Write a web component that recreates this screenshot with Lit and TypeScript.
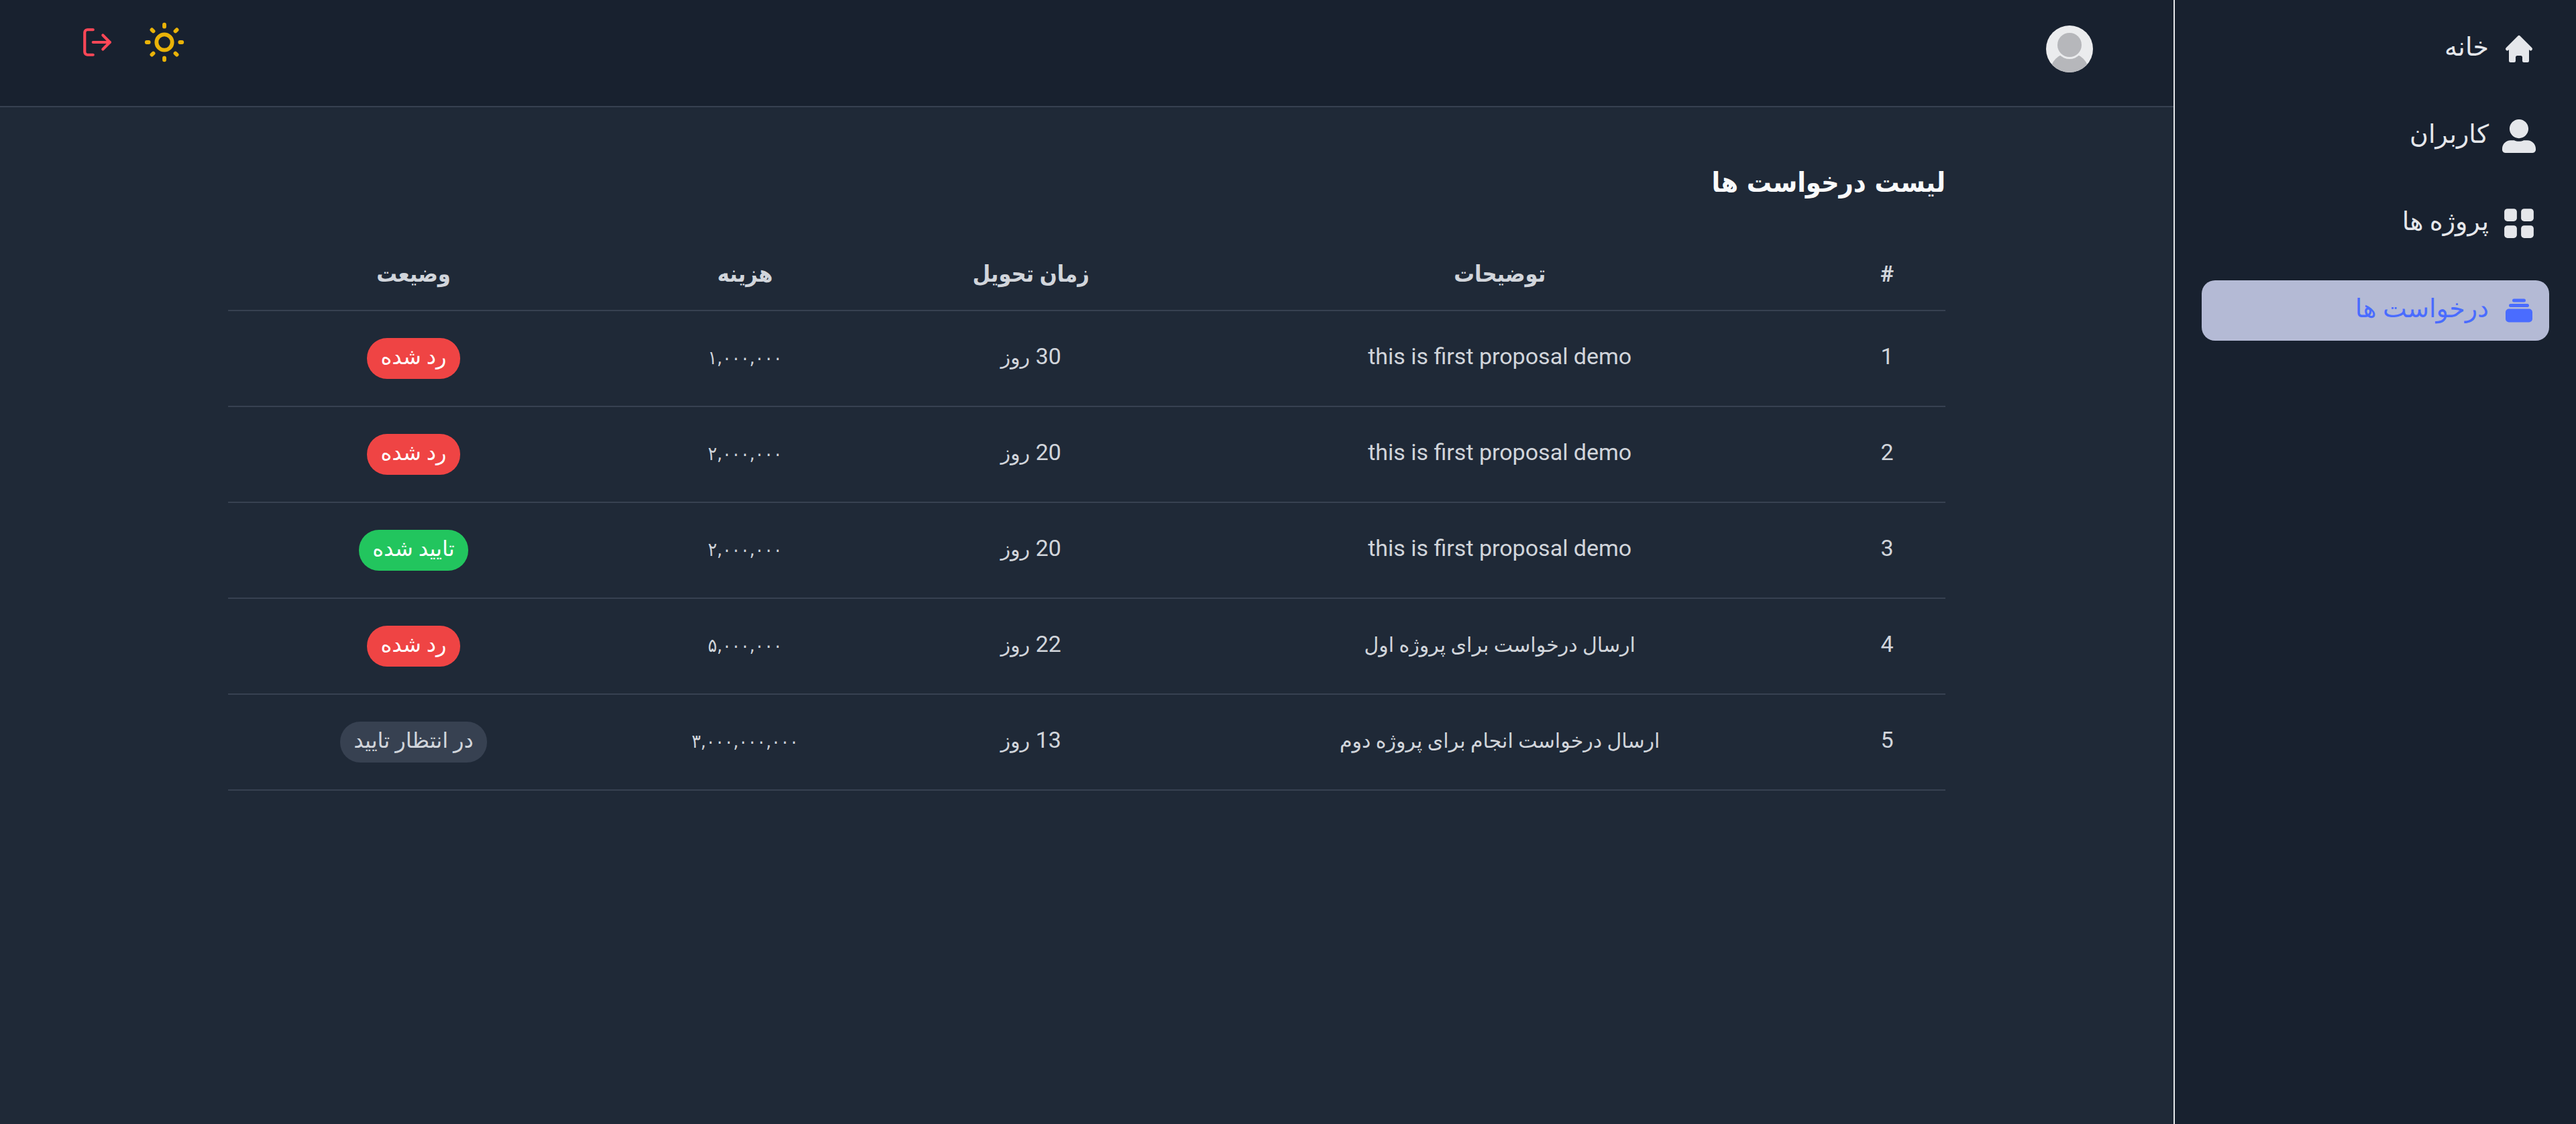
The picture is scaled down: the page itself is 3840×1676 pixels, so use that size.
import { LitElement, html, svg, css, type TemplateResult } from "lit";
import { customElement, state } from "lit/decorators.js";
import { classMap } from "lit/directives/class-map.js";

type Status = "rejected" | "accepted" | "pending";

interface Proposal {
  description: string;
  latin?: boolean;
  days: number;
  price: string;
  status: Status;
}

interface NavItem {
  label: string;
  href: string;
  icon: TemplateResult;
}

const STATUS_LABEL: Record<Status, string> = {
  rejected: "رد شده",
  accepted: "تایید شده",
  pending: "در انتظار تایید",
};

const PROPOSALS: Proposal[] = [
  { description: "this is first proposal demo", latin: true, days: 30, price: "۱,۰۰۰,۰۰۰", status: "rejected" },
  { description: "this is first proposal demo", latin: true, days: 20, price: "۲,۰۰۰,۰۰۰", status: "rejected" },
  { description: "this is first proposal demo", latin: true, days: 20, price: "۲,۰۰۰,۰۰۰", status: "accepted" },
  { description: "ارسال درخواست برای پروژه اول", days: 22, price: "۵,۰۰۰,۰۰۰", status: "rejected" },
  { description: "ارسال درخواست انجام برای پروژه دوم", days: 13, price: "۳,۰۰۰,۰۰۰,۰۰۰", status: "pending" },
];

const icon = (viewBox: string, body: unknown) => html`
  <svg class="icon" viewBox=${viewBox} fill="currentColor" aria-hidden="true">${body}</svg>
`;

const NAV: NavItem[] = [
  {
    label: "خانه",
    href: "#home",
    icon: icon(
      "0 0 20 20",
      svg`<path d="M10.707 2.293a1 1 0 00-1.414 0l-7 7a1 1 0 001.414 1.414L4 10.414V17a1 1 0 001 1h2a1 1 0 001-1v-2a1 1 0 011-1h2a1 1 0 011 1v2a1 1 0 001 1h2a1 1 0 001-1v-6.586l.293.293a1 1 0 001.414-1.414l-7-7z" />`
    ),
  },
  {
    label: "کاربران",
    href: "#users",
    icon: icon(
      "0 0 512 512",
      svg`<path d="M256 288c79.5 0 144-64.5 144-144S335.5 0 256 0 112 64.5 112 144s64.5 144 144 144zm128 32h-55.1c-22.2 10.2-46.9 16-72.9 16s-50.6-5.8-72.9-16H128C57.3 320 0 377.3 0 448v16c0 26.5 21.5 48 48 48h416c26.5 0 48-21.5 48-48v-16c0-70.7-57.3-128-128-128z" />`
    ),
  },
  {
    label: "پروژه ها",
    href: "#projects",
    icon: icon(
      "0 0 16 16",
      svg`<rect x="1" y="1" width="6" height="6" rx="1.5" /><rect x="9" y="1" width="6" height="6" rx="1.5" /><rect x="1" y="9" width="6" height="6" rx="1.5" /><rect x="9" y="9" width="6" height="6" rx="1.5" />`
    ),
  },
  {
    label: "درخواست ها",
    href: "#proposals",
    icon: icon(
      "0 0 20 20",
      svg`<path d="M7 3a1 1 0 000 2h6a1 1 0 100-2H7zM4 7a1 1 0 011-1h10a1 1 0 110 2H5a1 1 0 01-1-1zM2 11a2 2 0 012-2h12a2 2 0 012 2v4a2 2 0 01-2 2H4a2 2 0 01-2-2v-4z" />`
    ),
  },
];

@customElement("app-sidebar")
export class AppSidebar extends LitElement {
  @state() private current = "#proposals";

  static styles = css`
    :host {
      display: block;
      background: #18212f;
      border-left: 2px solid #e5e7eb;
    }
    .list {
      display: flex;
      flex-direction: column;
      gap: 40px;
      margin: 0;
      padding: 28px 40px;
      list-style: none;
    }
    .link {
      display: flex;
      align-items: center;
      gap: 20px;
      padding: 20px;
      border-radius: 20px;
      color: #e5e7eb;
      font-size: 38px;
      line-height: 43px;
      text-decoration: none;
    }
    .label {
      padding-bottom: 5px;
    }
    .active {
      background: #b4bad5;
      color: #4a6cff;
    }
    .icon {
      display: block;
      flex: none;
      width: 50px;
      height: 50px;
    }
  `;

  render() {
    return html`
      <nav>
        <ul class="list">
          ${NAV.map(
            (item) => html`
              <li>
                <a
                  class=${classMap({ link: true, active: item.href === this.current })}
                  href=${item.href}
                  @click=${() => (this.current = item.href)}
                >
                  ${item.icon}<span class="label">${item.label}</span>
                </a>
              </li>
            `
          )}
        </ul>
      </nav>
    `;
  }
}

@customElement("app-header")
export class AppHeader extends LitElement {
  static styles = css`
    :host {
      display: flex;
      justify-content: space-between;
      align-items: flex-start;
      padding: 28px 120px 50px;
      background: #18212f;
      border-bottom: 2px solid #374151;
    }
    .avatar {
      display: block;
      padding-top: 10px;
    }
    .avatar-image {
      display: block;
      width: 70px;
      height: 70px;
      border-radius: 50%;
    }
    .actions {
      display: flex;
      align-items: center;
      gap: 40px;
    }
    .action {
      display: block;
      padding: 0;
      border: 0;
      background: none;
      cursor: pointer;
    }
    .line-icon {
      display: block;
      fill: none;
      stroke: currentColor;
      stroke-width: 2;
      stroke-linecap: round;
      stroke-linejoin: round;
    }
    .theme {
      color: #eab308;
    }
    .theme .line-icon {
      width: 70px;
      height: 70px;
    }
    .logout {
      color: #ff4757;
    }
    .logout .line-icon {
      width: 50px;
      height: 50px;
    }
  `;

  render() {
    return html`
      <a class="avatar" href="#profile" aria-label="حساب کاربری">
        <svg class="avatar-image" viewBox="0 0 70 70" aria-hidden="true">
          <rect width="70" height="70" fill="#ebecee" />
          <circle cx="35" cy="70" r="29" fill="#b6b7bb" />
          <circle cx="35" cy="29" r="21" fill="#ebecee" />
          <circle cx="35" cy="29" r="18" fill="#b6b7bb" />
        </svg>
      </a>
      <div class="actions">
        <button class="action theme" type="button" aria-label="تغییر پوسته">
          <svg class="line-icon" viewBox="0 0 24 24" aria-hidden="true">
            <path
              d="M12 3v1m0 16v1m9-9h-1M4 12H3m15.364 6.364l-.707-.707M6.343 6.343l-.707-.707m12.728 0l-.707.707M6.343 17.657l-.707.707M16 12a4 4 0 11-8 0 4 4 0 018 0z"
            />
          </svg>
        </button>
        <button class="action logout" type="button" aria-label="خروج">
          <svg class="line-icon" viewBox="0 0 24 24" aria-hidden="true">
            <path d="M9 21H5a2 2 0 0 1-2-2V5a2 2 0 0 1 2-2h4" />
            <polyline points="16 17 21 12 16 7" />
            <line x1="21" y1="12" x2="9" y2="12" />
          </svg>
        </button>
      </div>
    `;
  }
}

@customElement("proposal-table")
export class ProposalTable extends LitElement {
  static styles = css`
    :host {
      display: block;
    }
    .table {
      width: 100%;
      table-layout: fixed;
      border-collapse: separate;
      border-spacing: 0;
      color: #d1d5db;
      font-size: 34px;
      text-align: center;
    }
    .col-index {
      width: 6.8%;
    }
    .col-description {
      width: 38.3%;
    }
    .col-time {
      width: 16.3%;
    }
    .col-price {
      width: 17%;
    }
    .head {
      padding: 24px 0;
      border-bottom: 2px solid #374151;
      font-family: Roboto, "DejaVu Sans Condensed", "DejaVu Sans", sans-serif;
      font-weight: 700;
      line-height: 60px;
    }
    .cell {
      padding: 37px 0 43px;
      border-bottom: 2px solid #374151;
      line-height: 61px;
      vertical-align: top;
    }
    .status {
      padding: 40px 0;
    }
    .fa {
      font-size: 30px;
      line-height: 1;
    }
    .price {
      font-family: "DejaVu Sans Condensed", "DejaVu Sans", sans-serif;
      font-size: 28px;
      line-height: 1;
    }
    .badge {
      display: inline-block;
      padding: 0 20px 4px;
      border-radius: 30px;
      font-size: 32px;
      line-height: 57px;
      vertical-align: top;
    }
    .rejected {
      background: #ef4444;
      color: #fff;
    }
    .accepted {
      background: #22c55e;
      color: #fff;
    }
    .pending {
      background: #374151;
      color: #d1d5db;
    }
  `;

  render() {
    return html`
      <table class="table">
        <colgroup>
          <col class="col-index" />
          <col class="col-description" />
          <col class="col-time" />
          <col class="col-price" />
          <col />
        </colgroup>
        <thead>
          <tr>
            ${["#", "توضیحات", "زمان تحویل", "هزینه", "وضیعت"].map(
              (title) => html`<th class="head" scope="col">${title}</th>`
            )}
          </tr>
        </thead>
        <tbody>
          ${PROPOSALS.map(
            (row, index) => html`
              <tr>
                <td class="cell">${index + 1}</td>
                <td class="cell"><span class=${classMap({ fa: !row.latin })}>${row.description}</span></td>
                <td class="cell">${row.days} <span class="fa">روز</span></td>
                <td class="cell"><span class="price">${row.price}</span></td>
                <td class="cell status">
                  <span class="badge ${row.status}">${STATUS_LABEL[row.status]}</span>
                </td>
              </tr>
            `
          )}
        </tbody>
      </table>
    `;
  }
}

@customElement("app-root")
export class AppRoot extends LitElement {
  static styles = css`
    :host {
      display: grid;
      grid-template-columns: 600px minmax(0, 1fr);
      min-height: 100vh;
      direction: rtl;
      background: #1f2937;
      font-family: Roboto, "DejaVu Sans", sans-serif;
    }
    .content {
      max-width: 2560px;
      margin: 0 auto;
      padding: 80px 0;
    }
    .title {
      margin: 0 0 50px;
      color: #f9fafb;
      font-family: "DejaVu Sans Condensed", "DejaVu Sans", sans-serif;
      font-size: 41px;
      font-weight: 700;
      line-height: 64px;
    }
  `;

  render() {
    return html`
      <app-sidebar></app-sidebar>
      <div>
        <app-header></app-header>
        <main class="content">
          <h1 class="title">لیست درخواست ها</h1>
          <proposal-table></proposal-table>
        </main>
      </div>
    `;
  }
}
